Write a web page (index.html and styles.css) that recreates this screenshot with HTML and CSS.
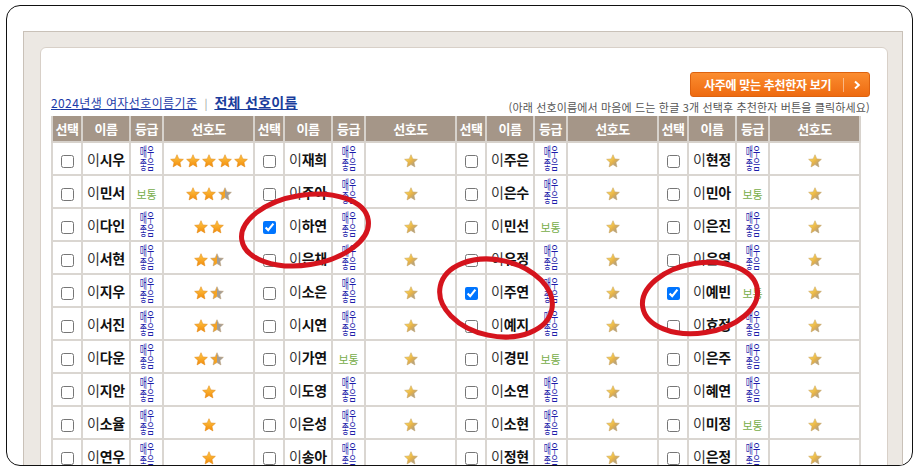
FILE: index.html
```html
<!DOCTYPE html>
<html lang="ko">
<head>
    <meta charset="UTF-8">
    <title>2024년생 여자 선호이름</title>
    <link rel="stylesheet" href="styles.css">
</head>
<body>
    <!-- star sprites -->
    <svg class="sprite" width="0" height="0" aria-hidden="true">
        <defs>
            <linearGradient id="g-or" x1="0" y1="0" x2="0" y2="1">
                <stop offset="0" stop-color="#ffc948"/>
                <stop offset="1" stop-color="#f28a0a"/>
            </linearGradient>
            <linearGradient id="g-half" x1="0" y1="0" x2="1" y2="0">
                <stop offset=".5" stop-color="#f6a322"/>
                <stop offset=".5" stop-color="#a29e99"/>
            </linearGradient>
            <linearGradient id="g-part" x1="0" y1="0" x2="1" y2="1">
                <stop offset=".3" stop-color="#f9cd4e"/>
                <stop offset=".55" stop-color="#e2b04c"/>
                <stop offset=".85" stop-color="#a39d95"/>
            </linearGradient>
            <symbol id="sf" viewBox="0 0 16 16">
                <polygon points="8,0.8 10.1,5.6 15.3,6.1 11.4,9.6 12.5,14.8 8,12.1 3.5,14.8 4.6,9.6 0.7,6.1 5.9,5.6" fill="url(#g-or)" stroke="#e2860e" stroke-width=".6"/>
            </symbol>
            <symbol id="sh" viewBox="0 0 16 16">
                <polygon points="8,0.8 10.1,5.6 15.3,6.1 11.4,9.6 12.5,14.8 8,12.1 3.5,14.8 4.6,9.6 0.7,6.1 5.9,5.6" fill="url(#g-half)" stroke="#b89a70" stroke-width=".6"/>
            </symbol>
            <symbol id="sp" viewBox="0 0 16 16">
                <polygon points="8,0.8 10.1,5.6 15.3,6.1 11.4,9.6 12.5,14.8 8,12.1 3.5,14.8 4.6,9.6 0.7,6.1 5.9,5.6" fill="url(#g-part)" stroke="#c4a260" stroke-width=".6"/>
            </symbol>
        </defs>
    </svg>

    <!-- --- FRAME --- -->
    <div class="frame">
        <div class="panel">
            <div class="sheet">
                <div class="actions">
                    <button class="btn-saju" type="button">
                        사주에 맞는 추천한자 보기
                        <span class="sep"></span>
                        <svg class="chev" viewBox="0 0 8 10"><path d="M2 1.5 L5.8 5 L2 8.5" fill="none" stroke="#fff" stroke-width="2"/></svg>
                    </button>
                </div>
                <div class="info">
                    <div class="links">
                        <a href="#" class="link">2024년생 여자선호이름기준</a>
                        <span class="bar">|</span>
                        <a href="#" class="link strong">전체 선호이름</a>
                    </div>
                    <div class="note">(아래 선호이름에서 마음에 드는 한글 3개 선택후 추천한자 버튼을 클릭하세요)</div>
                </div>

                <table class="names">
                    <colgroup>
                        <col class="c-sel"><col class="c-name"><col class="c-grade"><col class="c-star">
                        <col class="c-sel"><col class="c-name"><col class="c-grade"><col class="c-star">
                        <col class="c-sel"><col class="c-name"><col class="c-grade"><col class="c-star">
                        <col class="c-sel"><col class="c-name"><col class="c-grade"><col class="c-star">
                    </colgroup>
                    <thead>
                        <tr>
                            <th>선택</th><th>이름</th><th>등급</th><th>선호도</th>
                            <th>선택</th><th>이름</th><th>등급</th><th>선호도</th>
                            <th>선택</th><th>이름</th><th>등급</th><th>선호도</th>
                            <th>선택</th><th>이름</th><th>등급</th><th>선호도</th>
                        </tr>
                    </thead>
                    <tbody>
                        <tr>
                            <td><input type="checkbox"></td><td class="nm">이<b>시우</b></td><td><span class="good">매우<br>좋음</span></td>
                            <td><svg class="star"><use href="#sf"/></svg><svg class="star"><use href="#sf"/></svg><svg class="star"><use href="#sf"/></svg><svg class="star"><use href="#sf"/></svg><svg class="star"><use href="#sf"/></svg></td>
                            <td><input type="checkbox"></td><td class="nm">이<b>재희</b></td><td><span class="good">매우<br>좋음</span></td><td><svg class="star"><use href="#sp"/></svg></td>
                            <td><input type="checkbox"></td><td class="nm">이<b>주은</b></td><td><span class="good">매우<br>좋음</span></td><td><svg class="star"><use href="#sp"/></svg></td>
                            <td><input type="checkbox"></td><td class="nm">이<b>현정</b></td><td><span class="good">매우<br>좋음</span></td><td><svg class="star"><use href="#sp"/></svg></td>
                        </tr>
                        <tr>
                            <td><input type="checkbox"></td><td class="nm">이<b>민서</b></td><td><span class="soso">보통</span></td>
                            <td><svg class="star"><use href="#sf"/></svg><svg class="star"><use href="#sf"/></svg><svg class="star"><use href="#sh"/></svg></td>
                            <td><input type="checkbox"></td><td class="nm">이<b>주아</b></td><td><span class="good">매우<br>좋음</span></td><td><svg class="star"><use href="#sp"/></svg></td>
                            <td><input type="checkbox"></td><td class="nm">이<b>은수</b></td><td><span class="good">매우<br>좋음</span></td><td><svg class="star"><use href="#sp"/></svg></td>
                            <td><input type="checkbox"></td><td class="nm">이<b>민아</b></td><td><span class="soso">보통</span></td><td><svg class="star"><use href="#sp"/></svg></td>
                        </tr>
                        <tr>
                            <td><input type="checkbox"></td><td class="nm">이<b>다인</b></td><td><span class="good">매우<br>좋음</span></td>
                            <td><svg class="star"><use href="#sf"/></svg><svg class="star"><use href="#sf"/></svg></td>
                            <td><input type="checkbox" checked></td><td class="nm">이<b>하연</b></td><td><span class="good">매우<br>좋음</span></td><td><svg class="star"><use href="#sp"/></svg></td>
                            <td><input type="checkbox"></td><td class="nm">이<b>민선</b></td><td><span class="soso">보통</span></td><td><svg class="star"><use href="#sp"/></svg></td>
                            <td><input type="checkbox"></td><td class="nm">이<b>은진</b></td><td><span class="good">매우<br>좋음</span></td><td><svg class="star"><use href="#sp"/></svg></td>
                        </tr>
                        <tr>
                            <td><input type="checkbox"></td><td class="nm">이<b>서현</b></td><td><span class="good">매우<br>좋음</span></td>
                            <td><svg class="star"><use href="#sf"/></svg><svg class="star"><use href="#sh"/></svg></td>
                            <td><input type="checkbox"></td><td class="nm">이<b>은채</b></td><td><span class="good">매우<br>좋음</span></td><td><svg class="star"><use href="#sp"/></svg></td>
                            <td><input type="checkbox"></td><td class="nm">이<b>유정</b></td><td><span class="good">매우<br>좋음</span></td><td><svg class="star"><use href="#sp"/></svg></td>
                            <td><input type="checkbox"></td><td class="nm">이<b>은영</b></td><td><span class="good">매우<br>좋음</span></td><td><svg class="star"><use href="#sp"/></svg></td>
                        </tr>
                        <tr>
                            <td><input type="checkbox"></td><td class="nm">이<b>지우</b></td><td><span class="good">매우<br>좋음</span></td>
                            <td><svg class="star"><use href="#sf"/></svg><svg class="star"><use href="#sh"/></svg></td>
                            <td><input type="checkbox"></td><td class="nm">이<b>소은</b></td><td><span class="good">매우<br>좋음</span></td><td><svg class="star"><use href="#sp"/></svg></td>
                            <td><input type="checkbox" checked></td><td class="nm">이<b>주연</b></td><td><span class="good">매우<br>좋음</span></td><td><svg class="star"><use href="#sp"/></svg></td>
                            <td><input type="checkbox" checked></td><td class="nm">이<b>예빈</b></td><td><span class="soso">보통</span></td><td><svg class="star"><use href="#sp"/></svg></td>
                        </tr>
                        <tr>
                            <td><input type="checkbox"></td><td class="nm">이<b>서진</b></td><td><span class="good">매우<br>좋음</span></td>
                            <td><svg class="star"><use href="#sf"/></svg><svg class="star"><use href="#sh"/></svg></td>
                            <td><input type="checkbox"></td><td class="nm">이<b>시연</b></td><td><span class="good">매우<br>좋음</span></td><td><svg class="star"><use href="#sp"/></svg></td>
                            <td><input type="checkbox"></td><td class="nm">이<b>예지</b></td><td><span class="good">매우<br>좋음</span></td><td><svg class="star"><use href="#sp"/></svg></td>
                            <td><input type="checkbox"></td><td class="nm">이<b>효정</b></td><td><span class="good">매우<br>좋음</span></td><td><svg class="star"><use href="#sp"/></svg></td>
                        </tr>
                        <tr>
                            <td><input type="checkbox"></td><td class="nm">이<b>다운</b></td><td><span class="good">매우<br>좋음</span></td>
                            <td><svg class="star"><use href="#sf"/></svg><svg class="star"><use href="#sh"/></svg></td>
                            <td><input type="checkbox"></td><td class="nm">이<b>가연</b></td><td><span class="soso">보통</span></td><td><svg class="star"><use href="#sp"/></svg></td>
                            <td><input type="checkbox"></td><td class="nm">이<b>경민</b></td><td><span class="soso">보통</span></td><td><svg class="star"><use href="#sp"/></svg></td>
                            <td><input type="checkbox"></td><td class="nm">이<b>은주</b></td><td><span class="good">매우<br>좋음</span></td><td><svg class="star"><use href="#sp"/></svg></td>
                        </tr>
                        <tr>
                            <td><input type="checkbox"></td><td class="nm">이<b>지안</b></td><td><span class="good">매우<br>좋음</span></td>
                            <td><svg class="star"><use href="#sf"/></svg></td>
                            <td><input type="checkbox"></td><td class="nm">이<b>도영</b></td><td><span class="good">매우<br>좋음</span></td><td><svg class="star"><use href="#sp"/></svg></td>
                            <td><input type="checkbox"></td><td class="nm">이<b>소연</b></td><td><span class="good">매우<br>좋음</span></td><td><svg class="star"><use href="#sp"/></svg></td>
                            <td><input type="checkbox"></td><td class="nm">이<b>혜연</b></td><td><span class="good">매우<br>좋음</span></td><td><svg class="star"><use href="#sp"/></svg></td>
                        </tr>
                        <tr>
                            <td><input type="checkbox"></td><td class="nm">이<b>소율</b></td><td><span class="good">매우<br>좋음</span></td>
                            <td><svg class="star"><use href="#sf"/></svg></td>
                            <td><input type="checkbox"></td><td class="nm">이<b>은성</b></td><td><span class="good">매우<br>좋음</span></td><td><svg class="star"><use href="#sp"/></svg></td>
                            <td><input type="checkbox"></td><td class="nm">이<b>소현</b></td><td><span class="good">매우<br>좋음</span></td><td><svg class="star"><use href="#sp"/></svg></td>
                            <td><input type="checkbox"></td><td class="nm">이<b>미정</b></td><td><span class="soso">보통</span></td><td><svg class="star"><use href="#sp"/></svg></td>
                        </tr>
                        <tr>
                            <td><input type="checkbox"></td><td class="nm">이<b>연우</b></td><td><span class="good">매우<br>좋음</span></td>
                            <td><svg class="star"><use href="#sf"/></svg></td>
                            <td><input type="checkbox"></td><td class="nm">이<b>송아</b></td><td><span class="good">매우<br>좋음</span></td><td><svg class="star"><use href="#sp"/></svg></td>
                            <td><input type="checkbox"></td><td class="nm">이<b>정현</b></td><td><span class="good">매우<br>좋음</span></td><td><svg class="star"><use href="#sp"/></svg></td>
                            <td><input type="checkbox"></td><td class="nm">이<b>은정</b></td><td><span class="good">매우<br>좋음</span></td><td><svg class="star"><use href="#sp"/></svg></td>
                        </tr>
                    </tbody>
                </table>
            </div>
        </div>
    </div>

    <!-- --- RED MARKS (annotation over the page) --- -->
    <svg class="marks" viewBox="0 0 920 472">
        <ellipse cx="305" cy="230" rx="64" ry="35" transform="rotate(-9 305 230)"/>
        <ellipse cx="496" cy="298" rx="57" ry="38" transform="rotate(12 496 298)"/>
        <ellipse cx="700" cy="298" rx="58" ry="35" transform="rotate(-9 700 298)"/>
    </svg>
</body>
</html>
```

FILE: styles.css
```css
/* --- RESET & GLOBAL --- */
* {
    margin: 0;
    padding: 0;
    box-sizing: border-box;
}

body {
    position: relative;
    width: 920px;
    height: 472px;
    overflow: hidden;
    background-color: #fff;
    font-family: "Noto Sans CJK KR", "Noto Sans", sans-serif;
    color: #222;
}

.sprite {
    position: absolute;
    width: 0;
    height: 0;
}

/* --- FRAME & PANELS --- */
.frame {
    margin: 5px 0 0 6px;
    width: 907px;
    height: 461px;
    border: 1px solid #111;
    border-radius: 14px;
    overflow: hidden;
    background-color: #fff;
}

.panel {
    margin: 25px 9px 0 16px;
    height: 600px;
    background-color: #ece8e3;
    border: 1px solid #c9c1b8;
    border-bottom: 0;
    padding: 15px 14px 0 16px;
}

.sheet {
    height: 600px;
    background-color: #fff;
    border: 1px solid #d8d0c8;
    border-radius: 6px 6px 0 0;
    padding: 24px 17px 0 10px;
}

/* --- TOP BAR --- */
.actions {
    display: flex;
    justify-content: flex-end;
}

.btn-saju {
    display: flex;
    align-items: center;
    width: 180px;
    height: 25px;
    padding: 0 0 0 13px;
    background: linear-gradient(#fb8d30, #ee6a10);
    border: 1px solid #dd620f;
    border-radius: 3px;
    color: #fff;
    font-family: inherit;
    font-size: 12px;
    font-weight: bold;
    letter-spacing: -0.3px;
    cursor: pointer;
}

.btn-saju .sep {
    width: 1px;
    height: 14px;
    margin: 0 9px 0 12px;
    background-color: rgba(255, 255, 255, 0.45);
}

.btn-saju .chev {
    width: 8px;
    height: 10px;
}

.info {
    display: flex;
    justify-content: space-between;
    align-items: flex-end;
    height: 19px;
    padding-bottom: 2px;
}

.links {
    display: flex;
    align-items: baseline;
    margin-bottom: 3px;
    line-height: 15px;
}

.link {
    color: #1b3aa8;
    font-size: 12px;
    letter-spacing: 0.4px;
    text-decoration: underline;
}

.link.strong {
    font-size: 14px;
    font-weight: bold;
    color: #1a3d9c;
    letter-spacing: 0.3px;
}

.bar {
    margin: 0 7px 0 7px;
    color: #999;
    font-size: 11px;
}

.note {
    color: #555;
    font-size: 11px;
    line-height: 14px;
    letter-spacing: 0.15px;
}

/* --- NAME TABLE --- */
.names {
    width: 808px;
    table-layout: fixed;
    border-collapse: collapse;
}

.c-sel { width: 30px; }
.c-name { width: 48px; }
.c-grade { width: 33px; }
.c-star { width: 91px; }

.names th {
    height: 26px;
    background-color: #a59688;
    color: #fff;
    font-size: 13px;
    font-weight: bold;
    border: 2px solid #d7d2cc;
    border-top: 0;
    letter-spacing: -0.5px;
}

.names td {
    height: 33px;
    border: 2px solid #dad6d1;
    text-align: center;
    vertical-align: middle;
    padding: 0;
}

.names input {
    width: 13px;
    height: 13px;
    margin: 0;
    vertical-align: middle;
}

.nm {
    font-size: 14px;
    color: #333;
    white-space: nowrap;
    letter-spacing: -0.3px;
}

.nm b {
    color: #111;
}

.good {
    display: inline-block;
    color: #1c1caa;
    font-size: 13px;
    line-height: 13px;
    transform: scaleX(0.6);
}

.soso {
    color: #77ad48;
    font-size: 11px;
}

.star {
    width: 14px;
    height: 14px;
    margin: 0 1px;
    vertical-align: middle;
}

/* --- ANNOTATION --- */
.marks {
    position: absolute;
    top: 0;
    left: 0;
    width: 920px;
    height: 472px;
    pointer-events: none;
}

.marks ellipse {
    fill: none;
    stroke: #d5141d;
    stroke-width: 5;
}
```
